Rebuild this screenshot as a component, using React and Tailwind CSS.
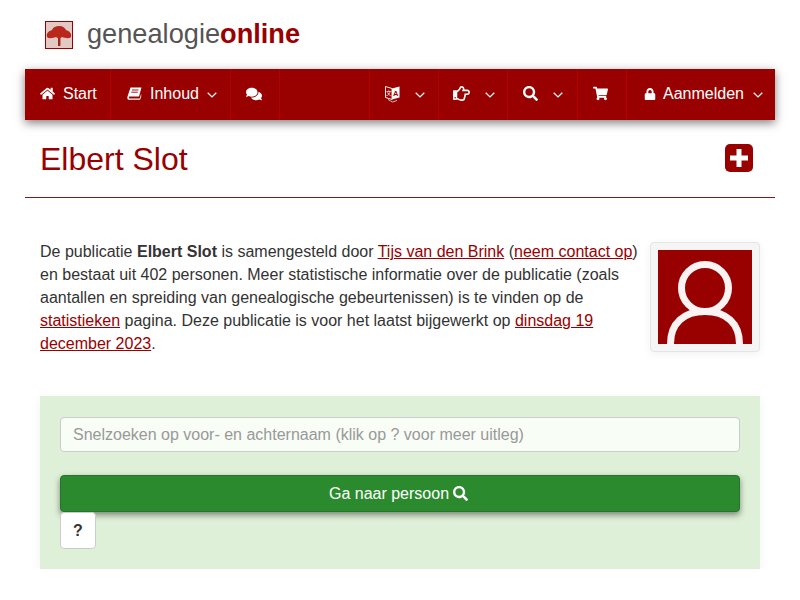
import React from 'react';
import { FaHome, FaComments, FaRegHandPointRight, FaSearch, FaShoppingCart, FaLock } from 'react-icons/fa';

function Chevron({ className }) {
  return (
    <svg width="10" height="6" viewBox="0 0 10 6" className={className}>
      <path d="M0.7 0.8 L5 5 L9.3 0.8" fill="none" stroke="white" strokeWidth="1.2" />
    </svg>
  );
}

// slanted book, the package only has the straight one
function BookIcon() {
  return (
    <svg width="15" height="13" viewBox="0 0 15 13" className="ml-[16px]">
      <path d="M3.5 0.5 H14.5 L12 9.5 H2.5 C1.6 9.5 1.6 11.5 2.5 11.5 H12.8 L14.2 6.5 V10 L13 12.8 H2 C0.4 12.8 0 11 0.5 9.5Z" fill="white" />
      <path d="M5 3 H11.5 M4.3 5.2 H10.8" stroke="#990000" strokeWidth="0.9" />
    </svg>
  );
}

function TranslateIcon() {
  return (
    <svg width="15" height="18" viewBox="0 0 15 18" className="ml-[15px]">
      <path d="M0.5 1.5 L7 3.5 V14.5 L0.5 12.5 Z" fill="#990000" stroke="white" strokeWidth="0.9" />
      <path d="M7 3.5 L14.5 1.5 V12.5 L7 14.5 Z" fill="white" />
      <path d="M3 14.5 L7.5 17 L12 15.5" fill="none" stroke="white" strokeWidth="0.7" />
      <text x="10.8" y="10.5" fontSize="7.5" fontWeight="700" textAnchor="middle" fill="#990000" fontFamily="Liberation Sans, sans-serif">A</text>
      <text x="3.7" y="10" fontSize="5.5" textAnchor="middle" fill="white" fontFamily="Noto Sans CJK SC, sans-serif">文</text>
    </svg>
  );
}

function NavItem({ width, children, border = true }) {
  return (
    <div className={`${width} h-full flex items-center pb-[2px] ${border ? 'border-r border-[#b50000]' : ''}`}>
      {children}
    </div>
  );
}

function Logo() {
  return (
    <div className="w-[28px] h-[28px] border border-[#990000] bg-[#e2c9c4] flex items-center justify-center">
      <svg width="26" height="26" viewBox="0 0 26 26">
        <path d="M12 14 h2.4 v10 h-2.4z" fill="#9a2a1c" />
        <path d="M1 15 C0 11 3 9 6 8 C7 5 10 4 13 4 C17 4 19 6 20 8 C23 9 26 11 25 15 C23 17 19 16 16 15 L13 17 L10 15 C7 16 3 17 1 15Z" fill="#b8281c" />
      </svg>
    </div>
  );
}

export default function App() {
  return (
    <div className="w-[800px] bg-white font-['Liberation_Sans',Arial,sans-serif] text-[16px] leading-[23px] text-[#333]">
      <div className="h-[69px] pl-[45px] flex items-center gap-[14px]">
        <Logo />
        <div className="text-[27.2px] leading-none text-[#555] -mt-[1px]">
          genealogie<span className="font-bold text-[#990000]">online</span>
        </div>
      </div>

      <div className="mx-[25px] h-[51px] bg-[#990000] flex items-center text-white shadow-[0_3px_9px_rgba(0,0,0,0.5)]">
        <NavItem width="w-[86px]">
          <FaHome className="ml-[15px] text-[15px]" />
          <span className="ml-[8px]">Start</span>
        </NavItem>
        <NavItem width="w-[120px]">
          <BookIcon />
          <span className="ml-[8px]">Inhoud</span>
          <Chevron className="ml-[8px] mt-[2px]" />
        </NavItem>
        <NavItem width="w-[49px]">
          <FaComments className="ml-[15px] text-[16px]" />
        </NavItem>
        <NavItem width="w-[90px]">
          <span></span>
        </NavItem>
        <NavItem width="w-[69px]">
          <TranslateIcon />
          <Chevron className="ml-[15px] mt-[2px]" />
        </NavItem>
        <NavItem width="w-[69px]">
          <FaRegHandPointRight className="ml-[14px] text-[17px]" />
          <Chevron className="ml-[15px] mt-[2px]" />
        </NavItem>
        <NavItem width="w-[70px]">
          <FaSearch className="ml-[15px] text-[15px]" />
          <Chevron className="ml-[15px] mt-[2px]" />
        </NavItem>
        <NavItem width="w-[49px]">
          <FaShoppingCart className="ml-[15px] text-[15px]" />
        </NavItem>
        <NavItem width="w-[148px]" border={false}>
          <FaLock className="ml-[17px] text-[12px]" />
          <span className="ml-[7px]">Aanmelden</span>
          <Chevron className="ml-[9px] mt-[2px]" />
        </NavItem>
      </div>

      <div className="mx-[25px] h-[78px] border-b border-[#7a1a1a] pl-[15px] pr-[22px] flex items-center justify-between">
        <h1 className="text-[32px] leading-none text-[#990000] mt-[1px]">Elbert Slot</h1>
        <div className="w-[28px] h-[28px] bg-[#990000] rounded-[5px] flex items-center justify-center mt-[-1px]">
          <svg width="20" height="20" viewBox="0 0 20 20">
            <path d="M7.5 1 H12.5 V7.5 H19 V12.5 H12.5 V19 H7.5 V12.5 H1 V7.5 H7.5Z" fill="white" />
          </svg>
        </div>
      </div>

      <div className="mx-[40px] mt-[44px] flex justify-between">
        <p className="w-[600px] -mt-[2px]">
          De publicatie <b>Elbert Slot</b> is samengesteld door <a className="text-[#990000] underline">Tijs van den Brink</a> (<a className="text-[#990000] underline">neem contact op</a>) en bestaat uit 402 personen. Meer statistische informatie over de publicatie (zoals aantallen en spreiding van genealogische gebeurtenissen) is te vinden op de <a className="text-[#990000] underline">statistieken</a> pagina. Deze publicatie is voor het laatst bijgewerkt op <a className="text-[#990000] underline">dinsdag 19 december 2023</a>.
        </p>
        <div className="w-[110px] h-[110px] p-[7px] bg-[#f5f5f5] border border-[#e5e5e5] rounded-[4px] shadow-[0_2px_8px_rgba(0,0,0,0.06)]">
          <svg viewBox="0 0 94 94" className="w-[94px] h-[94px] block">
            <rect width="94" height="94" fill="#990000" />
            <circle cx="47" cy="38" r="23.5" fill="none" stroke="#fbf3f3" strokeWidth="7" />
            <path d="M12.5 94 C12.5 73 26 61.5 47 61.5 C68 61.5 81.5 73 81.5 94" fill="none" stroke="#fbf3f3" strokeWidth="7" />
          </svg>
        </div>
      </div>

      <div className="mx-[40px] mt-[41px] h-[173px] bg-[#dff0d8] px-[20px] pt-[21px] shadow-[0_2px_10px_rgba(0,0,0,0.05)]">
        <div className="h-[35px] bg-[#f8fdf6] border border-[#ccc] rounded-[4px] px-[12px] flex items-center text-[#999]">
          Snelzoeken op voor- en achternaam (klik op ? voor meer uitleg)
        </div>
        <div className="mt-[23px] h-[37px] bg-[#2c8a2e] border border-[#26752a] rounded-[4px] flex items-center justify-center gap-[4px] pr-[3px] text-white shadow-[0_3px_6px_rgba(0,0,0,0.45)]">
          Ga naar persoon <FaSearch className="text-[15px]" />
        </div>
        <div className="w-[36px] h-[37px] bg-white border border-[#ccc] rounded-[4px] flex items-center justify-center font-bold text-[#333]">
          ?
        </div>
      </div>
    </div>
  );
}
